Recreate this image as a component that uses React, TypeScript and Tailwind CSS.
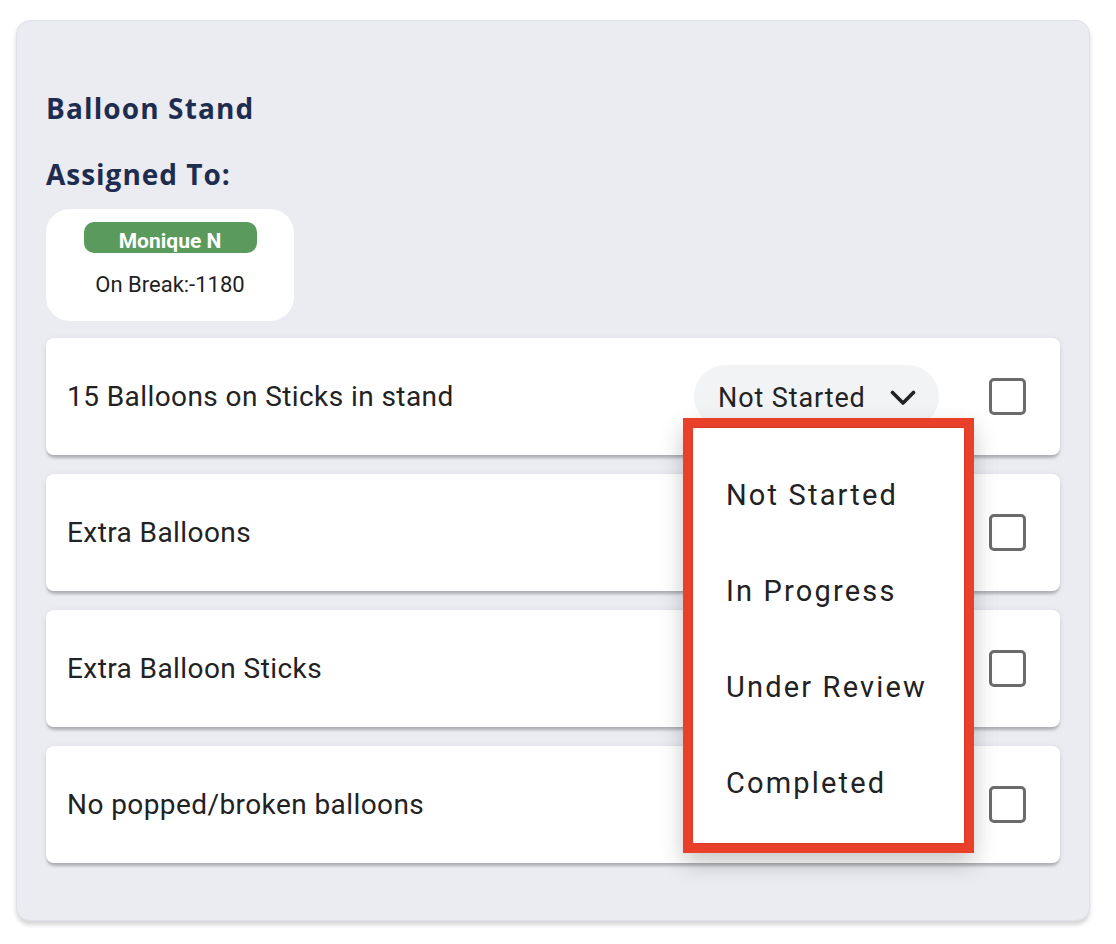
import React, { useState } from "react";

const tasks = [
  "15 Balloons on Sticks in stand",
  "Extra Balloons",
  "Extra Balloon Sticks",
  "No popped/broken balloons",
];

const statuses = ["Not Started", "In Progress", "Under Review", "Completed"];

const Chevron = () => (
  <svg width="26" height="16" viewBox="0 0 26 16" fill="none">
    <polyline
      points="2.5,2.5 13,13 23.5,2.5"
      stroke="#222"
      strokeWidth="3.6"
      strokeLinecap="round"
      strokeLinejoin="round"
    />
  </svg>
);

const Checkbox = () => (
  <div className="h-[37px] w-[37px] rounded-[5px] border-[3.5px] border-[#6b6b6b] bg-white" />
);

const StatusMenu = () => (
  // red outline around the open menu
  <div className="absolute left-[-11px] top-[53px] z-10 w-[291px] border-[10px] border-[#e9402a] bg-white shadow-[0_10px_22px_rgba(0,0,0,0.22)]">
    <div className="rounded-[4px] bg-white pt-[20px] pb-[11px] shadow-[0_0_2px_rgba(0,0,0,0.25)]">
      {statuses.map((s) => (
        <div
          key={s}
          className="flex h-[96px] items-center pl-[33px] text-[29px] tracking-[0.075em] text-[#222]"
        >
          {s}
        </div>
      ))}
    </div>
  </div>
);

const TaskRow = ({ title, open }: { title: string; open: boolean }) => {
  return (
    <div className="flex h-[117px] items-center justify-between rounded-lg bg-white pl-[21px] pr-[34px] shadow-[0_4px_3px_-1px_rgba(0,0,0,0.22),0_1px_6px_rgba(0,0,0,0.08)]">
      <p className="pt-[1px] text-[28px] tracking-[0.015em] text-[#222]">{title}</p>
      <div className="flex items-center gap-[50px]">
        {open ? (
          <div className="relative">
            <div className="flex h-[63px] w-[245px] items-center gap-[24px] rounded-full bg-[#f2f3f5] pl-[24px] pt-[3px]">
              <span className="text-[27px] tracking-[0.033em] text-[#222]">Not Started</span>
              <Chevron />
            </div>
            <StatusMenu />
          </div>
        ) : null}
        <Checkbox />
      </div>
    </div>
  );
};

const App = () => {
  const [openRow] = useState<number>(0);

  return (
    <div className="min-h-[944px] bg-white px-[16px] pt-[20px] [font-family:Roboto,'Liberation_Sans',sans-serif]">
      <div className="w-[1074px] rounded-[14px] border border-[#dfe1e8] bg-[#ebecf2] px-[29px] pt-[71px] pb-[57px] shadow-[0_4px_4px_rgba(0,0,0,0.16)]">
        <h2 className="text-[28px] font-bold leading-[32px] tracking-[0.04em] text-[#1e2c4f] [font-family:'Open_Sans',sans-serif]">
          Balloon Stand
        </h2>
        <h3 className="mt-[34px] text-[28px] font-bold leading-[32px] tracking-[0.035em] text-[#1e2c4f] [font-family:'Open_Sans',sans-serif]">
          Assigned To:
        </h3>

        {/* assignee chip */}
        <div className="mt-[19px] flex h-[112px] w-[248px] flex-col items-center rounded-3xl bg-white pt-[13px]">
          <div className="flex h-[31px] w-[173px] justify-center rounded-[10px] bg-[#5a9a5c] pt-[7px] text-[21px] font-bold leading-[24px] text-white">
            Monique N
          </div>
          <p className="mt-[19px] text-[22px] leading-[26px] text-[#1f1f1f]">On Break:-1180</p>
        </div>

        <div className="mt-[17px] flex flex-col gap-[19px]">
          {tasks.map((t, i) => (
            <TaskRow key={t} title={t} open={i === openRow} />
          ))}
        </div>
      </div>
    </div>
  );
};

export default App;
